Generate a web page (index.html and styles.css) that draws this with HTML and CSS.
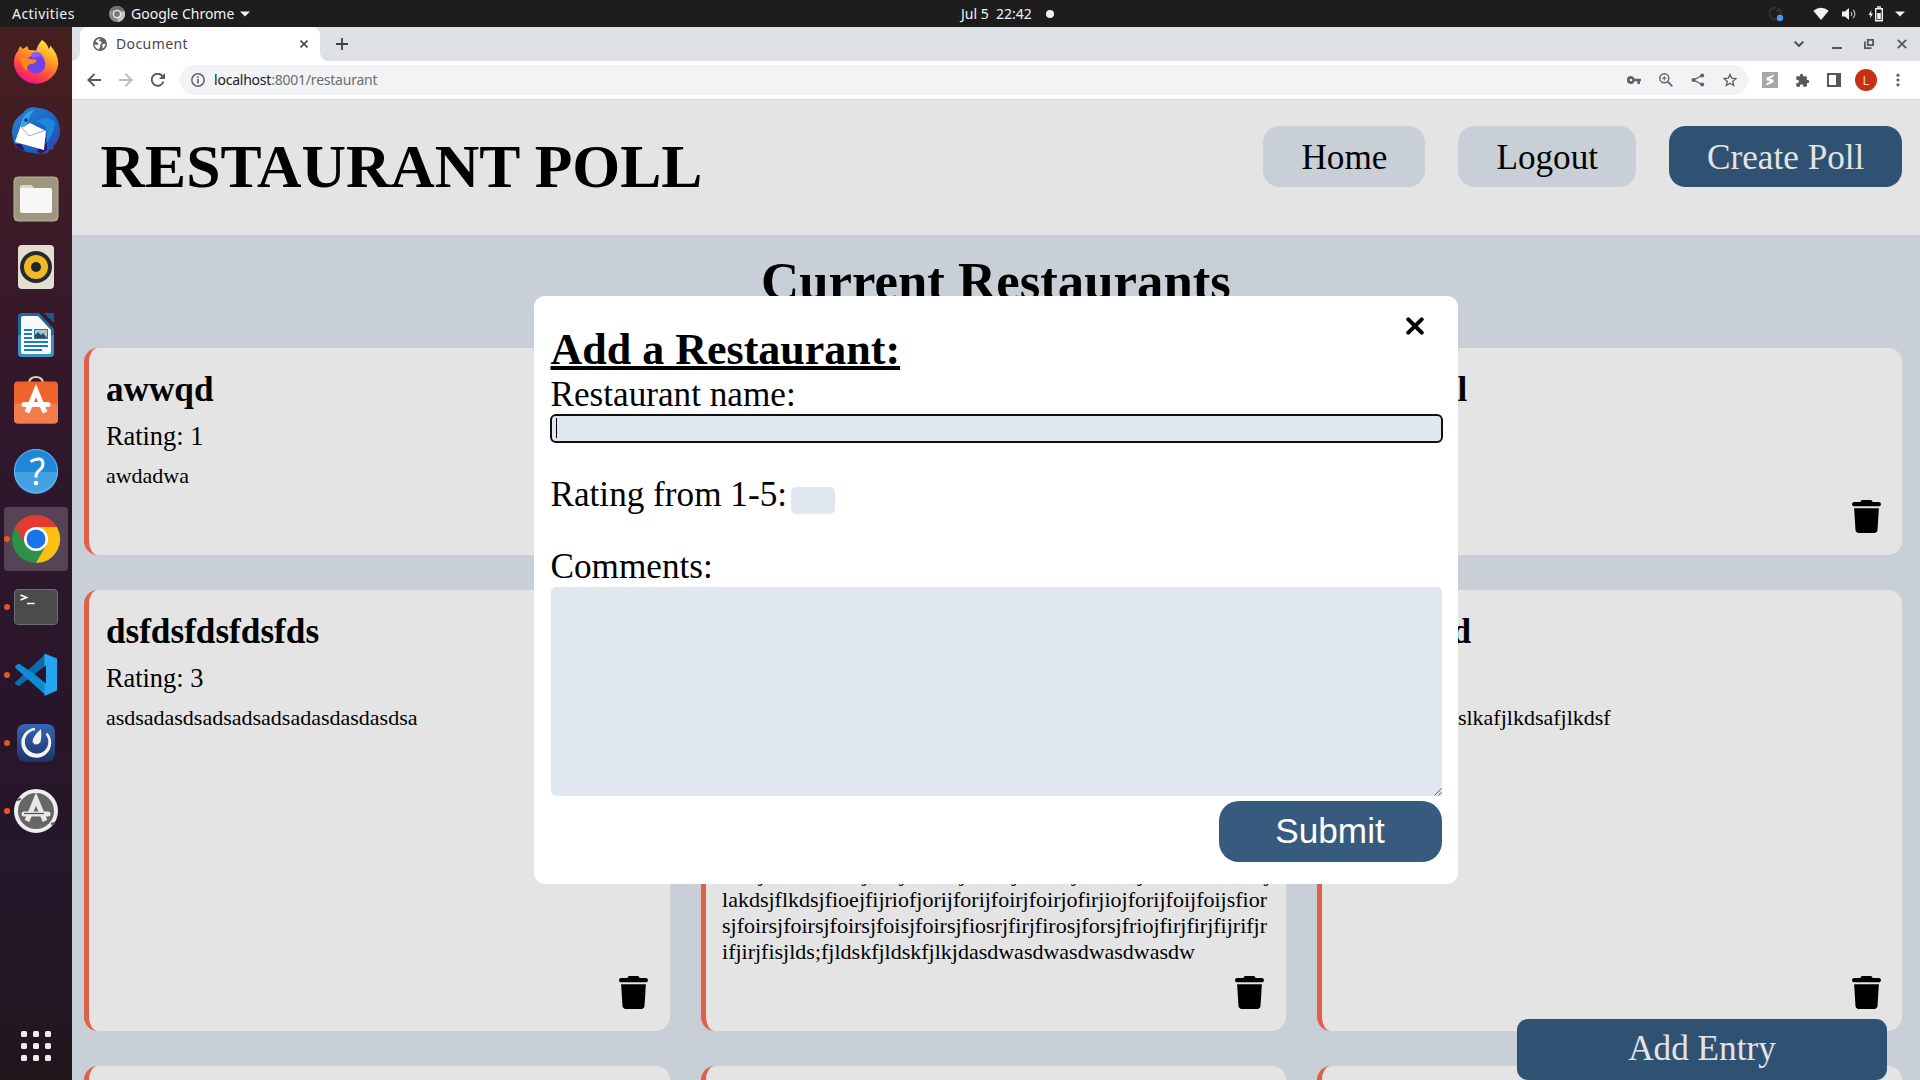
FILE: index.html
```html
<!DOCTYPE html>
<html lang="en">
<head>
<meta charset="utf-8">
<title>Document</title>
<link rel="stylesheet" href="styles.css">
</head>
<body>
<div class="desktop">
  <header class="topbar">
    <div class="topbar-left">
      <span class="t-activities">Activities</span>
      <svg class="t-chrome" width="16" height="16" viewBox="0 0 16 16"><circle cx="8" cy="8" r="8" fill="#8b8b8b"/><path d="M8 8L15.5 5A8 8 0 0 1 9 16z" fill="#c4c4c4"/><path d="M1 4.2A8 8 0 0 1 15 4.2z" fill="#6f6f6f"/><circle cx="8" cy="8" r="4.2" fill="#eee"/><circle cx="8" cy="8" r="2.9" fill="#777"/></svg>
      <span class="t-app">Google Chrome</span>
      <svg class="t-caret" width="10" height="6" viewBox="0 0 10 6"><path d="M0 .5h10L5 5.5z" fill="#f2f2f2"/></svg>
    </div>
    <div class="topbar-clock"><span class="t-date">Jul 5&nbsp; 22:42</span><i class="t-dot"></i></div>
    <div class="topbar-tray">
      <svg width="16" height="16" viewBox="0 0 16 16"><path d="M8 1.5A6 6 0 1 0 13 10M9 6l2-4M11.500 3.500q2 2 1.500 5" fill="none" stroke="#343434" stroke-width="2"/><circle cx="12" cy="12" r="3.200" fill="#5294f5"/></svg>
      <svg class="wifi" width="16" height="14" viewBox="0 0 16 14"><path d="M.3 3.800Q8-2.200 15.700 3.800L8 13z" fill="#f2f2f2"/></svg>
      <svg class="volume" width="16" height="14" viewBox="0 0 16 14"><path d="M1 4.500h3L8 1v12L4 9.500H1z" fill="#f2f2f2"/><path d="M10 5q1.500 2 0 4M12.200 2.800q3.200 4.200 0 8.400" stroke="#bbb" stroke-width="1.200" fill="none"/></svg>
      <svg class="battery" width="16" height="16" viewBox="0 0 16 16"><path d="M3.500 4L.5 9h2L2 12.500 5 7.500H3z" fill="#f2f2f2"/><path d="M7.700 2.700h6.600v12.100H7.700zM9 1h4" fill="none" stroke="#f2f2f2" stroke-width="1.400"/><path d="M9.200 7h3.600v6.300H9.200z" fill="#f2f2f2"/></svg>
      <svg class="menu-caret" width="10" height="6" viewBox="0 0 10 6"><path d="M0 .5h10L5 5.500z" fill="#f2f2f2"/></svg>
    </div>
  </header>
  <div class="workspace">
    <nav class="dock">
      <div class="app"><svg viewBox="0 0 48 48">
        <defs><linearGradient id="ff" x1=".8" y1="0" x2=".3" y2="1"><stop offset="0" stop-color="#fff04a"/><stop offset=".4" stop-color="#ff9a1f"/><stop offset=".75" stop-color="#ff3d4d"/><stop offset="1" stop-color="#e5148a"/></linearGradient></defs>
        <path d="M30 1q6 4 6.500 9 2-1.500 1.500-3.500Q46 14 46.300 25A22.300 22.300 0 0 1 2 25Q1.500 17 6 12q.5-3 2.500-5l2 3 5-3q0 3 2 4Q23 11 24 12 26 5 30 1z" fill="url(#ff)"/><circle cx="24" cy="25" r="9.500" fill="#7542e5"/><path d="M19 15q3-3 9-1.500l7 8q-4-5-9-4-6 2-5 2z" fill="#9059ff"/><path d="M7 19q6-2 10 1l8 1q-2 4-7 4-4 2-3 7-5-3-8-13z" fill="#ff8a16"/></svg></div>
      <div class="app"><svg viewBox="0 0 48 48">
        <defs><linearGradient id="tb" x1="0" y1="0" x2="1" y2="1"><stop offset="0" stop-color="#2786d8"/><stop offset=".6" stop-color="#1a62c4"/><stop offset="1" stop-color="#3b3fae"/></linearGradient></defs>
        <path d="M21 0q4 1 7 1 18 3 20 22 0 11-7 16l1 3-5 1-1 3-6 1Q12 46 4 40 0 33 0 24 1 12 11 6 14 1 21 0z" fill="url(#tb)"/><path d="M3 37q3 6 10 6l-4-6zM25 44l9-14 1 13-6 4z" fill="#28166b"/><path d="M10 15l-7 20 29 8 2-19-16-8-7 4z" fill="#fff"/><path d="M8 19l9 10 17-6" fill="none" stroke="#a9a9a9"/><path d="M9 20q0-14 14-18-7 8-7 14l-4 4z" fill="#3ba2e5"/><path d="M24 15q16 2 9 22 9-8 10-22-9-8-19 0z" fill="#1f86d8"/><circle cx="14" cy="13" r="1.700" fill="#143259"/></svg></div>
      <div class="app"><svg viewBox="0 0 48 48"><rect x="2" y="2" width="44" height="44" rx="4" fill="#9f967f" stroke="#bab39e"/><path d="M8 12q0-2 2-2h9l4 4v6H8z" fill="#dedacb"/><rect x="8" y="13" width="32" height="25" rx="2" fill="#f8f7f5"/></svg></div>
      <div class="app"><svg viewBox="0 0 48 48"><rect x="6" y="2" width="36" height="44" rx="4" fill="#e2ded2"/><circle cx="24" cy="24" r="16" fill="#292a31"/><circle cx="24" cy="24" r="12" fill="#eebc22"/><circle cx="24" cy="24" r="5" fill="#252525"/></svg></div>
      <div class="app"><svg viewBox="0 0 48 48"><path d="M10 2h17l15 16v24q0 4-4 4H10q-4 0-4-4V6q0-4 4-4z" fill="#1a6ba0"/><path d="M6 24h36v18q0 4-4 4H10q-4 0-4-4z" fill="#3b93c3"/><path d="M32 2h10v10z" fill="#175d8c"/><path d="M9 7q0-2 2-2h15l13 14v22q0 2-2 2H11q-2 0-2-2z" fill="#fafafa"/><path d="M12 19h8M12 23h8M12 27h8M12 31h24M12 35h24M12 39h18" stroke="#1e7db8" stroke-width="2"/><rect x="22" y="18" width="14" height="10" fill="#1e7db8"/><rect x="23" y="19" width="12" height="8" fill="#8fcbed"/><path d="M23 27v-3l3-3 3 3 2-2 4 5z" fill="#444"/><path d="M32 19h3v3z" fill="#f5c030"/></svg></div>
      <div class="app"><svg viewBox="0 2.500 48 48"><path d="M17 10V6q1-5.500 7-5.500T31 6v4" fill="none" stroke="#e7d1a0" stroke-width="2"/><rect x="2" y="5" width="44" height="42" rx="4" fill="#f0642c"/><path d="M2 27h44v16q0 4-4 4H6q-4 0-4-4z" fill="#f27d4c"/><path d="M15 36l9-22 9 22" fill="none" stroke="#fff" stroke-width="5"/><path d="M12 28h24" stroke="#fff" stroke-width="5" stroke-linecap="round"/></svg></div>
      <div class="app"><svg viewBox="0 0 48 48"><circle cx="24" cy="24" r="22" fill="#2187d8"/><path d="M2 25h44a22 22 0 0 1-44 0z" fill="#43a0e2"/><circle cx="24" cy="24" r="21.500" fill="none" stroke="#6bb8ea"/><path d="M18.500 14.500q12-6 12.500 2 0 4-4 7-3 2-3 7" fill="none" stroke="#fff" stroke-width="3"/><circle cx="24" cy="36" r="2.300" fill="#fff"/></svg></div>
      <div class="app running active"><svg viewBox="0 0 48 48"><circle cx="24" cy="24" r="24" fill="#2b9348"/><path d="M3.200 12A24 24 0 0 1 44.800 12H24L13.600 30z" fill="#e33b2e"/><path d="M44.800 12A24 24 0 0 1 24 48L34.400 30 24 12z" fill="#fdc010"/><circle cx="24" cy="24" r="12" fill="#fff"/><circle cx="24" cy="24" r="9.500" fill="#1a73e8"/></svg></div>
      <div class="app running"><svg viewBox="0 0 48 48"><rect x="2.500" y="6.500" width="43" height="35" rx="3.500" fill="#4b4b4b" stroke="#6d6d6d"/><path d="M8.500 12l6 2.500-6 2.500M15 20.500h7.500" fill="none" stroke="#fff" stroke-width="1.600"/></svg></div>
      <div class="app running"><svg viewBox="0 -.5 48 48"><path d="M34 2L4 30q-2 2 0 3l3 1.500L34 14z" fill="#0b6db0"/><path d="M34 44L4 17q-2-2 0-3l3-2L34 31z" fill="#0f8bd6"/><path d="M32.500 2L45 7v32l-12.500 5.500z" fill="#24a6f0"/><path d="M34 14v18L23 23z" fill="#29162e"/></svg></div>
      <div class="app running"><svg viewBox="0 0 48 48"><defs><linearGradient id="mm" x1="0" y1="0" x2="0" y2="1"><stop offset="0" stop-color="#3765b6"/><stop offset="1" stop-color="#1d3566"/></linearGradient></defs><rect x="5" y="5" width="38" height="38" rx="8" fill="url(#mm)"/><path d="M22 9.500A15 15 0 1 0 33.500 12.500 13 13 0 1 1 13 18Q15 12 22 9.500z" fill="#f3f3f3" transform="translate(0 -.5)"/><path d="M23 10A13 13 0 1 0 34.500 14.500" fill="none" stroke="#f3f3f3" stroke-width="2.500"/><path d="M29 10q1 7-.5 13-4.500 5-8 0Q20 18 29 10z" fill="#f3f3f3"/></svg></div>
      <div class="app running"><svg viewBox="0 0 48 48"><circle cx="24" cy="24" r="20" fill="#666" stroke="#eee" stroke-width="4"/><path d="M15 34l9-22 9 22" fill="none" stroke="#e8e8e8" stroke-width="5"/><path d="M12 27h24" stroke="#e8e8e8" stroke-width="5" stroke-linecap="round"/><path d="M12 26.500h20" stroke="#7c3a78" stroke-width="1.200"/><path d="M5 13l4-1M39 37l4-1" stroke="#555" stroke-width="2"/></svg></div>
      <div class="launcher"><i></i><i></i><i></i><i></i><i></i><i></i><i></i><i></i><i></i></div>
    </nav>

    <div class="browser">
      <div class="tabstrip">
        <div class="tab">
          <svg class="globe" width="14" height="14" viewBox="0 0 14 14"><circle cx="7" cy="7" r="7" fill="#5f6368"/><path d="M9 1.500Q6 2 6 4q3 0 2.500 2.500Q6 8 7.500 9.500 6 11 6 12.500 2 11.500 1.500 7.500L5 8V6L2.500 4.500Q4 1.500 9 1.500zM10 7q2-.5 2.500 0-.5 3-3 4.500Q10 9 9 8.500z" fill="#fff"/></svg>
          <span class="tab-title">Document</span>
          <svg width="8" height="8" viewBox="0 0 8 8"><path d="M.5.5l7 7M7.500.5l-7 7" stroke="#45484b" stroke-width="1.600"/></svg>
        </div>
        <svg class="newtab" width="12" height="12" viewBox="0 0 12 12"><path d="M6 0v12M0 6h12" stroke="#3c4043" stroke-width="1.800"/></svg>
        <div class="winctl">
          <svg class="chev" width="10" height="6" viewBox="0 0 10 6"><path d="M.7.700L5 5 9.300.700" fill="none" stroke="#45484b" stroke-width="1.900"/></svg>
          <svg class="min" width="10" height="10" viewBox="0 0 10 10"><path d="M0 9h10" stroke="#55595d" stroke-width="2"/></svg>
          <svg class="restore" width="10" height="10" viewBox="0 0 10 10"><path d="M3.800.900h5.300v5.300H3.800zM.9 2.500v6.600h6.600" fill="none" stroke="#55595d" stroke-width="1.800"/></svg>
          <svg class="close" width="10" height="10" viewBox="0 0 10 10"><path d="M.8.800l8.400 8.400M9.200.800L.8 9.200" stroke="#55595d" stroke-width="1.900"/></svg>
        </div>
      </div>
      <div class="toolbar">
        <span class="tool"><svg width="14" height="14" viewBox="0 0 14 14"><path d="M14 7H1.500M7.500.800L1.300 7l6.200 6.200" fill="none" stroke="#55595d" stroke-width="1.900"/></svg></span>
        <span class="tool"><svg width="14" height="14" viewBox="0 0 14 14"><path d="M0 7h12.500M6.500.800L12.700 7l-6.200 6.200" fill="none" stroke="#b9bbbd" stroke-width="1.900"/></svg></span>
        <span class="tool"><svg width="14" height="14" viewBox="0 0 14 14"><path d="M12.500 8.500A6 6 0 1 1 11.300 2.800L13 5" fill="none" stroke="#55595d" stroke-width="1.900"/><path d="M14 0v6H8z" fill="#55595d"/></svg></span>
        <div class="omnibox">
          <svg width="14" height="14" viewBox="0 0 14 14"><circle cx="7" cy="7" r="6.200" fill="none" stroke="#5f6368" stroke-width="1.500"/><path d="M7 6v4.500M7 3.200v1.700" stroke="#5f6368" stroke-width="1.700"/></svg>
          <span class="url"><b>localhost</b>:8001/restaurant</span>
          <div class="omni-icons">
            <span class="tool"><svg width="14" height="8" viewBox="0 0 14 8"><path d="M4 0a4 4 0 0 1 3.700 2.700H14v2.600h-1V8h-2.600V5.300H7.700A4 4 0 1 1 4 0zm0 2.700a1.300 1.300 0 1 0 0 2.600 1.300 1.300 0 0 0 0-2.600z" fill="#5f6368"/></svg></span>
            <span class="tool"><svg width="14" height="14" viewBox="0 0 14 14"><circle cx="5.300" cy="5.300" r="4.500" fill="none" stroke="#5f6368" stroke-width="1.400"/><path d="M8.700 8.700L13.300 13.300" stroke="#5f6368" stroke-width="1.900"/><path d="M5.300 3v4.600M3 5.300h4.600" stroke="#5f6368" stroke-width="1.100"/></svg></span>
            <span class="tool"><svg width="14" height="14" viewBox="0 0 14 14"><path d="M11.500 2.300L2.500 7l9 4.700" fill="none" stroke="#5f6368" stroke-width="1.300"/><circle cx="11.200" cy="2.400" r="2" fill="#5f6368"/><circle cx="2.500" cy="7" r="2" fill="#5f6368"/><circle cx="11.200" cy="11.600" r="2" fill="#5f6368"/></svg></span>
            <span class="tool"><svg width="14" height="14" viewBox="0 0 14 14"><path d="M7 1.400l1.700 3.800 4.200.4-3.200 2.800 1 4.100L7 10.300l-3.700 2.200 1-4.100L1.100 5.600l4.200-.4z" fill="none" stroke="#5f6368" stroke-width="1.300"/></svg></span>
          </div>
        </div>
        <div class="extensions">
          <span class="tool"><svg width="16" height="16" viewBox="0 0 16 16"><path d="M0 0h16v16H0z" fill="#a6a6a6"/><path d="M11.500 2.500v2.300L7.500 6.700l4 1v2.500l-7 3.300v-2.300l4-1.900-4-1V5.800z" fill="#fff"/></svg></span>
          <span class="tool"><svg width="15" height="15" viewBox="0 0 24 24"><path d="M20.500 11H19V7c0-1.100-.9-2-2-2h-4V3.500a2.500 2.500 0 0 0-5 0V5H4c-1.100 0-2 .9-2 2v3.800h1.500a2.700 2.700 0 0 1 0 5.400H2V20c0 1.100.9 2 2 2h3.800v-1.500a2.700 2.700 0 0 1 5.400 0V22H17c1.100 0 2-.9 2-2v-4h1.500a2.500 2.500 0 0 0 0-5z" fill="#55595d"/></svg></span>
          <span class="tool"><svg width="14" height="14" viewBox="0 0 14 14"><path d="M1 1h12v12H1z" fill="#fff" stroke="#55595d" stroke-width="2"/><path d="M9 0h5v14H9z" fill="#55595d"/></svg></span>
          <span class="tool"><span class="avatar">L</span></span>
          <span class="tool"><svg width="4" height="14" viewBox="0 0 4 14"><circle cx="2" cy="2.200" r="1.600" fill="#5f6368"/><circle cx="2" cy="7" r="1.600" fill="#5f6368"/><circle cx="2" cy="11.800" r="1.600" fill="#5f6368"/></svg></span>
        </div>
      </div>

      <div class="page">
        <header class="site-header">
          <h1>RESTAURANT POLL</h1>
          <nav class="site-nav"><a class="btn">Home</a><a class="btn">Logout</a><a class="btn primary">Create Poll</a></nav>
        </header>
        <h2 class="section-title">Current Restaurants</h2>
        <main class="cards">
          <article class="card"><h3>awwqd</h3><p class="rating">Rating: 1</p><p class="comment">awdadwa</p></article>
          <article class="card"></article>
          <article class="card"><h3>asdasdal</h3><svg class="trash" viewBox="0 0 448 512"><use href="#trash"/></svg></article>
          <article class="card"><h3>dsfdsfdsfdsfds</h3><p class="rating">Rating: 3</p><p class="comment">asdsadasdsadsadsadsadasdasdasdsa</p><svg class="trash" viewBox="0 0 448 512"><use href="#trash"/></svg></article>
          <article class="card"><p class="comment tail">asdfjlkdsfsaflkdj,safjlkdsafjdlksajfdlksajflkdsa;jflkdsaflkd,safj<br>lakdsjflkdsjfioejfijriofjorijforijfoirjfoirjofirjiojforijfoijfoijsfior<br>sjfoirsjfoirsjfoirsjfoisjfoirsjfiosrjfirjfirosjforsjfriojfirjfirjfijrifjr<br>ifjirjfisjlds;fjldskfjldskfjlkjdasdwasdwasdwasdwasdw</p><svg class="trash" viewBox="0 0 448 512"><use href="#trash"/></svg></article>
          <article class="card"><h3>asdasdfd</h3><p class="rating">&nbsp;</p><p class="comment">dsalkfjdsalkfjslkafjlkdsafjlkdsf</p><svg class="trash" viewBox="0 0 448 512"><use href="#trash"/></svg></article>
          <article class="card"></article>
          <article class="card"></article>
          <article class="card"></article>
        </main>
        <button class="add-entry">Add Entry</button>

        <section class="modal">
          <svg class="modal-close" viewBox="0 0 18 18"><path d="M2.300 2.300l13.400 13.400M15.700 2.300L2.300 15.700" stroke="#000" stroke-width="4" stroke-linecap="round"/></svg>
          <h2>Add a Restaurant:</h2>
          <label>Restaurant name:</label>
          <div class="name-field"><i class="cursor"></i></div>
          <div class="rating-row"><label>Rating from 1-5:</label><div class="rating-field"></div></div>
          <label class="comments-label">Comments:</label>
          <div class="comments-field"><svg width="8" height="8" viewBox="0 0 8 8"><path d="M.5 7.500l7-7M4.500 7.500l3-3" stroke="#555" stroke-width="1"/></svg></div>
          <button class="submit">Submit</button>
        </section>
      </div>
    </div>
  </div>
</div>
<svg class="defs" width="0" height="0"><symbol id="trash" viewBox="0 0 448 512"><path d="M135.200 17.700L128 32H32C14.300 32 0 46.300 0 64S14.300 96 32 96H416c17.700 0 32-14.300 32-32s-14.300-32-32-32H320l-7.200-14.300C307.400 6.800 296.300 0 284.200 0H163.800c-12.100 0-23.200 6.800-28.600 17.700zM416 128H32L53.200 467c1.600 25.300 22.600 45 47.900 45H346.900c25.300 0 46.300-19.700 47.900-45L416 128z"/></symbol></svg>
</body>
</html>
```
FILE: styles.css
```css
* { box-sizing: border-box; }
body { margin: 0; overflow: hidden; font-family: "Liberation Serif", serif; color: #000; }
h1, h2, h3, p { margin: 0; }
svg { display: block; flex: none; }
.defs { position: absolute; }
.desktop { width: 1920px; height: 1080px; display: flex; flex-direction: column; overflow: hidden; }

/* system bar */
.topbar { height: 27px; flex: none; background: #1d1d1d; color: #f2f2f2; display: grid; grid-template-columns: 961px 1fr auto; font: 14px/27px "Noto Sans", sans-serif; white-space: nowrap; }
.topbar-left, .topbar-clock, .topbar-tray { display: flex; align-items: center; }
.topbar-left { padding-left: 12px; }
.t-activities { width: 97px; letter-spacing: .45px; }
.t-app { margin-left: 6px; width: 109px; }
.t-dot { width: 8px; height: 8px; border-radius: 50%; background: #f2f2f2; margin-left: 12px; }
.t-date { width: 73px; }
.topbar-tray { padding-right: 15px; }
.wifi { margin-left: 29px; }
.volume { margin-left: 12px; }
.battery { margin-left: 11px; }
.menu-caret { margin-left: 11px; }

/* dock */
.workspace { flex: 1; display: flex; min-height: 0; }
.dock { width: 72px; flex: none; padding: 4px; display: flex; flex-direction: column; gap: 4px; background: linear-gradient(#461f20, #3c1a28 20%, #2f172c 40%, #29152a 65%, #25172a 82%, #21161c); }
.app { width: 64px; height: 64px; flex: none; display: flex; align-items: center; justify-content: center; border-radius: 4px; position: relative; }
.app svg { width: 48px; height: 48px; overflow: visible; }
.app.active { background: #564456; }
.app.running::before { content: ""; position: absolute; left: 0; top: 29px; width: 6px; height: 6px; border-radius: 50%; background: #e95420; }
.launcher { margin: auto auto 15px; display: grid; grid-template-columns: repeat(3, 6px); gap: 6px; }
.launcher i { height: 6px; border-radius: 1.5px; background: #f0efeb; }

/* browser chrome */
.browser { flex: 1; min-width: 0; display: flex; flex-direction: column; }
.tabstrip { height: 34px; flex: none; background: #dde0e4; display: flex; align-items: center; padding-left: 8px; }
.tab { width: 240px; height: 34px; background: #fff; border-radius: 8px 8px 0 0; display: flex; align-items: center; padding: 0 12px 0 13px; position: relative; }
.tab::before, .tab::after { content: ""; position: absolute; bottom: 0; width: 8px; height: 8px; }
.tab::before { left: -8px; background: radial-gradient(circle at 0 0, transparent 7.5px, #fff 8px); }
.tab::after { right: -8px; background: radial-gradient(circle at 100% 0, transparent 7.5px, #fff 8px); }
.tab-title { flex: 1; margin-left: 9px; padding-bottom: 2px; font: 14px "Noto Sans", sans-serif; letter-spacing: .4px; color: #45484b; }
.newtab { margin-left: 16px; }
.winctl { margin-left: auto; display: flex; align-items: center; padding-right: 13px; }
.min { margin-left: 28px; }
.restore { margin-left: 22px; }
.close { margin-left: 23px; }
.toolbar { height: 39px; flex: none; background: #fff; border-bottom: 1px solid #d8d9da; display: flex; align-items: center; padding: 0 6px; }
.tool { width: 32px; height: 30px; flex: none; display: flex; align-items: center; justify-content: center; }
.omnibox { flex: 1; height: 30px; margin-left: 6px; background: #f1f3f4; border-radius: 15px; display: flex; align-items: center; padding: 0 2px 0 11px; }
.url { margin-left: 9px; padding-bottom: 2px; font: 14px "Noto Sans", sans-serif; letter-spacing: -.22px; color: #6b6f73; }
.url b { font-weight: 400; color: #202124; }
.omni-icons, .extensions { display: flex; }
.omni-icons { margin-left: auto; }
.extensions { margin-left: 6px; }
.avatar { width: 22px; height: 22px; border-radius: 50%; background: #c63013; color: #f3d5cf; font: 13px/22px "Noto Sans", sans-serif; text-align: center; }

/* page */
.page { flex: 1; min-height: 0; overflow: hidden; background: #c8cfd7; position: relative; }
.site-header { height: 135px; background: #e4e4e4; display: flex; justify-content: space-between; align-items: flex-start; padding: 26px 18px 0 28.6px; }
h1 { font-size: 61.6px; line-height: 70px; margin-top: 5px; }
.site-nav { display: flex; gap: 33px; }
.btn { font-size: 35.2px; line-height: 59px; padding: 2px 37.6px 0 38.4px; border-radius: 16.5px; background: #c8cfd7; }
.btn.primary { background: #2f5273; color: #e4e4e4; }
.section-title { font-size: 52.8px; line-height: 60px; text-align: center; margin: 16px 0 37px; }
.cards { display: grid; grid-template-columns: repeat(3, minmax(0, 1fr)); grid-template-rows: 207px 441px 207px; gap: 35px 30.8px; padding: 0 18px 0 12.4px; }
.card { background: #e4e4e4; border-left: 5.5px solid #e0604a; border-radius: 14px; padding: 22px 18px 0 16.5px; position: relative; }
.card h3 { font-size: 35.2px; line-height: 40px; margin-bottom: 11px; }
.rating { font-size: 26.4px; line-height: 30px; margin-bottom: 12px; }
.comment { font-size: 22px; line-height: 26px; white-space: nowrap; }
.comment.tail { margin-top: 249px; }
.trash { position: absolute; right: 21.5px; bottom: 22px; width: 29px; height: 33px; }
.add-entry { position: absolute; right: 33px; bottom: 0; width: 370px; height: 61px; border: 0; border-radius: 11px; background: #2f5273; color: #e4e4e4; font: 35.2px/59px "Liberation Serif", serif; padding: 0 0 2px; }

/* dialog */
.modal { position: absolute; left: 462px; top: 196px; width: 924px; height: 588px; background: #fff; border-radius: 11px; padding: 29px 16px 0 17px; display: flex; flex-direction: column; }
.modal h2 { font-size: 44px; line-height: 50px; margin-left: -.5px; text-decoration: underline; text-decoration-thickness: 4px; }
.modal label { font-size: 35.2px; line-height: 40px; margin-left: -.5px; }
.modal-close { position: absolute; right: 34px; top: 21px; width: 18px; height: 18px; }
.name-field { height: 29px; flex: none; margin: -1px -1px 0; border: 2px solid #101010; border-radius: 6px; background: #e0e7ee; padding: 2px 4px; }
.cursor { display: block; width: 1px; height: 20px; background: #000; }
.rating-row { display: flex; align-items: flex-end; gap: 3.5px; margin-top: 32px; }
.rating-field { width: 44px; height: 27px; margin-bottom: 1px; border-radius: 5px; background: #e1e7f0; }
.comments-label { margin-top: 32px; }
.comments-field { height: 209px; background: #e0e7ee; border-radius: 5px 5px 0 5px; display: flex; align-items: flex-end; justify-content: flex-end; }
.submit { align-self: flex-end; width: 223px; height: 61px; margin-top: 5px; border: 0; border-radius: 20px; background: #375b7e; color: #fff; font: 35.2px/59px "Liberation Sans", sans-serif; padding: 0 1px 2px 0; }
```
